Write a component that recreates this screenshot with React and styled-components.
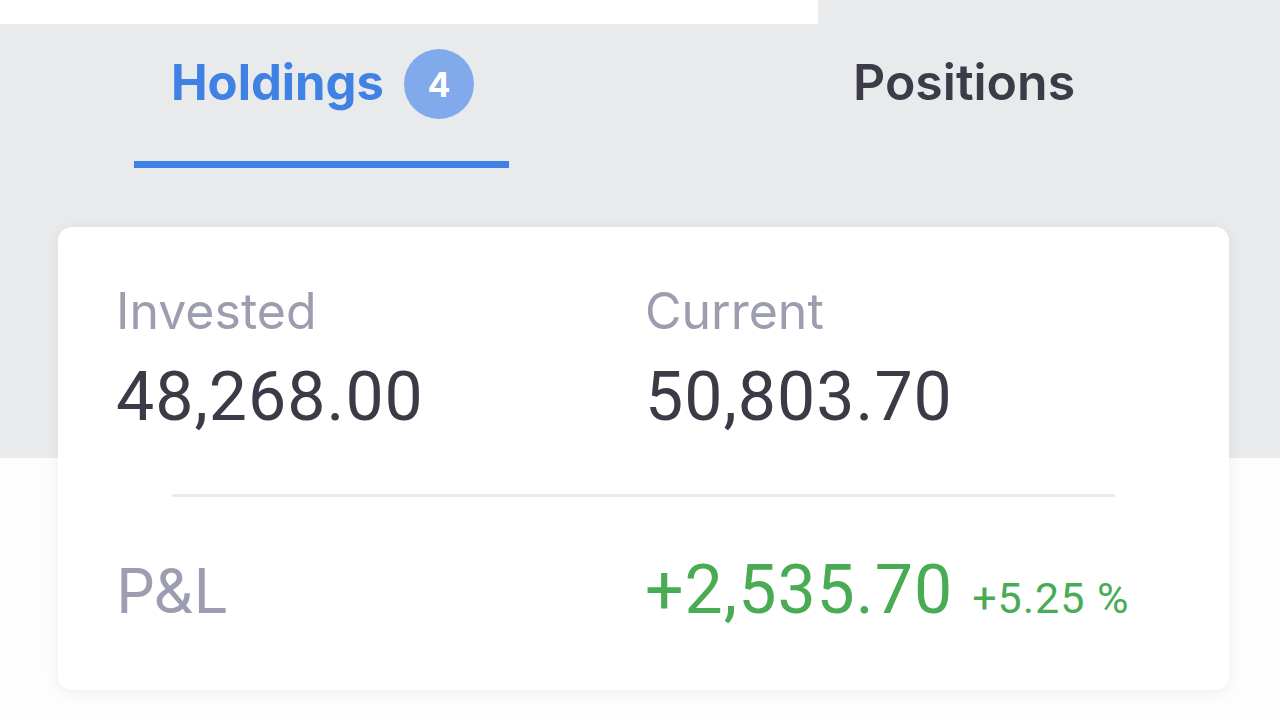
import * as React from "react"
import styled, { createGlobalStyle } from "styled-components"

const GlobalStyle = createGlobalStyle`
  html, body {
    margin: 0;
    padding: 0;
  }
  body {
    font-family: Inter, "Noto Sans", sans-serif;
    background: #fdfdfd;
  }
`

const App = () => {
  const summary = {
    invested: "48,268.00",
    current: "50,803.70",
    pnl: "+2,535.70",
    pnlPct: "+5.25 %",
  }

  return (
    <>
      <GlobalStyle />
      <Page>
        <TopStrip />
        <TabBar>
          <Tab active>
            <TabInner>
              <TabLabel active>Holdings</TabLabel>
              <Badge>4</Badge>
            </TabInner>
          </Tab>
          <Tab>
            <TabInner>
              <TabLabel>Positions</TabLabel>
            </TabInner>
          </Tab>
        </TabBar>

        <Card>
          <Stats>
            <Stat>
              <Label>Invested</Label>
              <Value>{summary.invested}</Value>
            </Stat>
            <Stat>
              <Label>Current</Label>
              <Value>{summary.current}</Value>
            </Stat>
          </Stats>
          <Divider />
          <PnlRow>
            <PnlLabel>P&amp;L</PnlLabel>
            <PnlValue>
              {summary.pnl}
              <PnlPct>{summary.pnlPct}</PnlPct>
            </PnlValue>
          </PnlRow>
        </Card>
      </Page>
    </>
  )
}

//Layout
const Page = styled.div`
  width: 1280px;
  height: 720px;
  overflow: hidden;
  background: linear-gradient(#e9eaec 0, #e9eaec 458px, #fdfdfd 458px);
`

const TopStrip = styled.div`
  width: 818px;
  height: 24px;
  background: #ffffff;
`

const TabBar = styled.div`
  display: flex;
  padding-left: 134px;
`

const Tab = styled.div`
  width: ${(p) => (p.active ? "375px" : "auto")};
  box-sizing: border-box;
  margin-left: ${(p) => (p.active ? "0" : "344px")};
  padding: 25px 0 42px ${(p) => (p.active ? "37px" : "0")};
  border-bottom: 7px solid ${(p) => (p.active ? "#3e80e3" : "transparent")};
`

const TabInner = styled.div`
  display: flex;
  align-items: center;
  height: 70px;
`

const TabLabel = styled.span`
  font-size: ${(p) => (p.active ? "49px" : "50px")};
  line-height: 1;
  font-weight: ${(p) => (p.active ? 700 : 600)};
  color: ${(p) => (p.active ? "#3f82e4" : "#3b3c48")};
  position: relative;
  top: -2px;
`

const Badge = styled.span`
  width: 70px;
  height: 70px;
  margin-left: 20px;
  border-radius: 50%;
  background: #80aaec;
  color: #ffffff;
  display: flex;
  align-items: center;
  justify-content: center;
  font-size: 34px;
  font-weight: 700;
`

const Card = styled.div`
  margin: 59px 0 0 58px;
  width: 1171px;
  height: 463px;
  box-sizing: border-box;
  padding-top: 54px;
  background: #ffffff;
  border-radius: 14px;
  box-shadow: 0 3px 14px rgba(40, 44, 60, 0.07);
`

const Stats = styled.div`
  display: grid;
  grid-template-columns: 529px 1fr;
  padding: 0 58px;
`

const Stat = styled.div`
  display: flex;
  flex-direction: column;
`

const Label = styled.div`
  font-size: 50px;
  line-height: 60px;
  color: #9c9eb0;
`

const Value = styled.div`
  margin-top: 15px;
  font-family: Roboto, "Liberation Sans", sans-serif;
  font-size: 68px;
  line-height: 82px;
  letter-spacing: 1px;
  color: #3a3b47;
`

const Divider = styled.div`
  height: 3px;
  margin: 56px 114px 0;
  background: #ebebed;
`

const PnlRow = styled.div`
  display: grid;
  grid-template-columns: 529px 1fr;
  align-items: baseline;
  padding: 0 58px;
  margin-top: 52px;
`

const PnlLabel = styled.div`
  font-size: 62px;
  line-height: 72px;
  color: #9c9eb0;
`

const PnlValue = styled.div`
  font-family: Roboto, "Liberation Sans", sans-serif;
  font-size: 68px;
  line-height: 82px;
  letter-spacing: 1px;
  color: #4aab55;
  white-space: nowrap;
`

const PnlPct = styled.span`
  margin-left: 19px;
  font-size: 43px;
  letter-spacing: 1px;
`

export default App
